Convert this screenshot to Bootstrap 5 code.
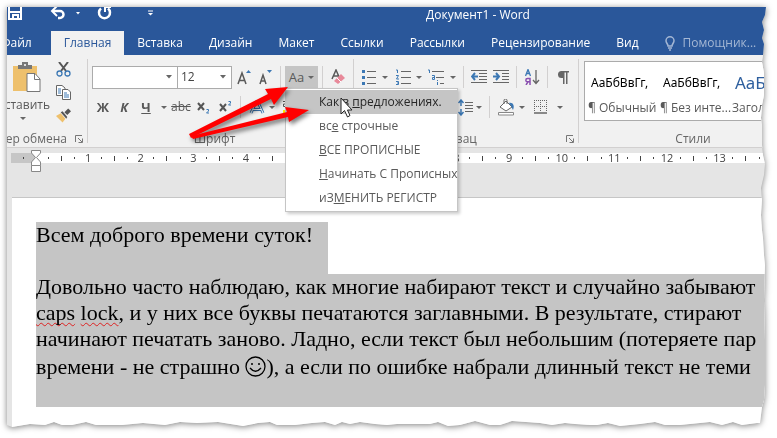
<!DOCTYPE html>
<html lang="ru">
<head>
<meta charset="utf-8">
<meta name="viewport" content="width=device-width, initial-scale=1">
<title>Документ1 - Word</title>
<link rel="stylesheet" href="https://cdn.jsdelivr.net/npm/bootstrap@5.3.0/dist/css/bootstrap.min.css">
<style>
  :root { --word-blue: #2a579a; --ink: #595959; --rule: #d2d0d0; }
  body { background: #fff; font: 12px/16px "Open Sans", "Noto Sans", sans-serif; color: var(--ink); overflow: hidden; }
  .sheet-shadow { padding: 7px 11px 8px 7px; filter: drop-shadow(0 1px 3px rgba(0,0,0,.5)); }
  .window { clip-path: url(#torn); background: #e5e5e5; }
  .window svg, .overlay svg { display: block; flex: none; }

  .titlebar { height: 24px; background: var(--word-blue); color: #fff; }
  .quick { width: 419px; height: 24px; }
  .tabs { height: 24px; background: var(--word-blue); flex-wrap: nowrap; --bs-nav-link-padding-x: 13px; --bs-nav-link-padding-y: 4px; }
  .tabs .nav-link { color: #fff; font-size: 12px; line-height: 16px; white-space: nowrap; border-radius: 0; }
  .tabs .nav-link.active { background: #f1f1f1; color: var(--word-blue); }
  .tabs .tab-file { margin-left: -19px; padding-right: 19px; }
  .tabs .tab-help { color: #a4b7d4; }

  .ribbon { background: #f1f1f1; border-bottom: 1px solid var(--rule); height: 93px; padding: 4px 0; }
  .group { border-right: 1px solid var(--rule); padding-top: 7px; flex: none; }
  .g-clip { width: 81px; padding-top: 3px; }
  .g-font { width: 266px; padding-left: 4px; }
  .g-para { width: 225px; padding-left: 7px; }
  .g-style { border: 0; padding: 2px 0 0 5px; min-width: 188px; }
  .line { height: 22px; }
  .line + .line { margin-top: 8px; }
  .clip-tools { height: 56px; }
  .cap { margin-top: 13px; height: 16px; color: #666; }
  .g-style .cap { margin-top: 10px; }
  .tool { border: 0; background: none; padding: 0; color: var(--ink); height: 22px; display: flex; align-items: center; justify-content: center; font-size: 13px; line-height: 16px; flex: none; }
  .w12 { width: 12px; } .w16 { width: 16px; } .w20 { width: 20px; } .w22 { width: 22px; } .w24 { width: 24px; }
  .caret { width: 0; height: 0; border: 3px solid transparent; border-top-color: #666; border-bottom: 0; flex: none; }
  .vr-line { width: 1px; height: 22px; background: var(--rule); flex: none; }
  .pick { height: 23px; border: 1px solid #ababab; border-radius: 0; padding: 0 16px 0 3px; font-size: 12px; line-height: 16px; color: #444; background-color: #fff; background-position: right 5px center; background-size: 6px 4px;
    background-image: url("data:image/svg+xml,%3Csvg xmlns='http://www.w3.org/2000/svg' viewBox='0 0 6 4'%3E%3Cpath d='M0 0h6L3 3.500z' fill='%23666'/%3E%3C/svg%3E"); }
  .pick-name { width: 86px; }
  .pick-size { width: 55px; margin-left: -1px; }
  .case-btn { width: 33px; background: #c5c5c5; gap: 4px; }
  .paste { font-size: 12px; margin-right: 6px; }
  .strike { font-size: 12px; }

  .gallery { border: 1px solid #ababab; background: #fff; height: 60px; overflow: hidden; }
  .style-item { width: 72px; flex: none; border: 0; background: none; padding: 0 0 0 3px; text-align: left; color: var(--ink); white-space: nowrap; font-size: 12px; }
  .sample { color: #000; padding: 6px 0 0 3px; font: 12px/30px "Noto Sans", sans-serif; }
  .sample-h { color: #2e5f9e; font-size: 17px; }
  .style-name { padding-top: 2px; }

  .case-menu { --bs-dropdown-min-width: 173px; --bs-dropdown-padding-y: 1px; --bs-dropdown-padding-x: 0; --bs-dropdown-border-radius: 0; --bs-dropdown-border-color: #c5c5c5; --bs-dropdown-link-color: #5a5a5a; --bs-dropdown-item-padding-y: 4px; --bs-dropdown-item-padding-x: 33px; --bs-dropdown-font-size: 12px; top: 100%; left: 0; box-shadow: 2px 2px 3px rgba(0,0,0,.2); }
  .case-menu .dropdown-item { padding-right: 0; line-height: 16px; }
  .case-menu .current { background: #c5c5c5; color: #262626; }

  .ruler-area { height: 49px; padding: 5px 0 0 4px; overflow: hidden; }
  .ruler { height: 10px; background: #fff; font: 11px/10px "Open Sans", sans-serif; color: #444; }
  .ruler-margin { width: 25px; height: 10px; background: #c6c6c6; flex: none; }
  .indent-mark { margin: -3px -5px 0 -5px; z-index: 1; position: relative; }
  .ticks { flex: 0 0 743px; padding-left: 6px; }
  .ticks > span { flex: 1 1 0; display: flex; align-items: center; justify-content: center; height: 10px; }
  .dot { width: 1px; height: 2px; background: #444; }
  .bar { width: 1px; height: 5px; background: #444; }

  .doc { margin-left: 5px; background: #fff; border-top: 1px solid #c6c6c6; padding: 24px 0 20px 24px; color: #000; font: 22px/26px "Liberation Serif", serif; overflow: hidden; }
  .doc p { margin: 0; white-space: nowrap; background: #c5c5c5; }
  .doc .greeting { width: 292px; height: 52px; }
  .doc .tall { line-height: 32px; height: 29px; display: flex; align-items: center; }
  .doc .rest { height: 26px; }
  .typo { text-decoration: underline wavy #d22 1px; text-underline-offset: 2px; text-decoration-skip-ink: none; }
  .overlay { position: absolute; left: 180px; top: 76px; z-index: 1100; pointer-events: none; }
  .arrows { filter: drop-shadow(2px 3px 2px rgba(0,0,0,.5)); }
</style>
<script src="https://cdn.jsdelivr.net/npm/bootstrap@5.3.0/dist/js/bootstrap.bundle.min.js"></script>
</head>
<body>
<svg width="0" height="0" class="position-absolute" aria-hidden="true">
  <clipPath id="torn" clipPathUnits="objectBoundingBox">
    <path transform="scale(.00131752 .00238095)" d="M0 0H759L758 8 755 15 757 23 755 31 757 37 756 48 755 55 757 66 757 88 755 98 754 111 755 118 755 138 756 148 758 157 757 168 754 181 755 193 754 208 755 223 756 231 757 248 758 258 757 293 758 333 758 378 757 393 755 400 753 416 750 416 735 418 726 415 715 418 703 415 673 418 658 418 648 415 633 417 613 419 601 416 590 418 583 418 568 417 558 416 545 418 533 416 505 414 493 418 483 418 468 414 453 418 441 419 431 415 423 417 390 417 380 418 368 417 353 415 343 417 335 415 328 418 318 415 305 416 288 418 270 418 263 415 251 416 236 419 211 415 190 416 173 415 158 418 136 416 115 418 89 418 79 415 65 418 55 418 47 415 38 418 23 417 5 420 0 418Z"/>
  </clipPath>
</svg>

<div class="sheet-shadow">
<div class="window">
  <header class="titlebar d-flex align-items-start">
    <div class="quick flex-shrink-0">
      <svg width="160" height="22" viewBox="0 0 160 22" fill="none" stroke="#fff" stroke-width="2">
        <path d="M2 0V12H14V0M2 5H14"/><path d="M6 12V8H11V12" stroke-width="2"/>
        <path d="M46 4H53A3.500 3.500 0 0 1 53 11H51" stroke-width="2.500"/><path d="M50-1L45 4L50 9"/>
        <path d="M69 5H73L71 7.500Z" fill="#fff" stroke="none"/>
        <path d="M94 1.500A5.500 5.500 0 1 0 101 1.500" stroke-width="2.500"/><path d="M98 5V0H104"/>
        <path d="M141 4H146" stroke-width="1"/><path d="M141 6H146L143.500 8.500Z" fill="#fff" stroke="none"/>
      </svg>
    </div>
    <div class="text-nowrap">Документ1 - Word</div>
  </header>

  <nav class="nav tabs" aria-label="Лента">
    <a class="nav-link tab-file" href="#">Файл</a>
    <a class="nav-link active" href="#" aria-current="page">Главная</a>
    <a class="nav-link" href="#">Вставка</a>
    <a class="nav-link" href="#">Дизайн</a>
    <a class="nav-link" href="#">Макет</a>
    <a class="nav-link" href="#">Ссылки</a>
    <a class="nav-link" href="#">Рассылки</a>
    <a class="nav-link" href="#">Рецензирование</a>
    <a class="nav-link" href="#">Вид</a>
    <a class="nav-link tab-help d-flex align-items-center gap-2" href="#">
      <svg width="10" height="15" viewBox="0 0 10 15" fill="none" stroke="#a4b7d4" stroke-width="1.500"><path d="M3 10C3 8 1 7 1 4.800A4 4 0 0 1 9 4.800C9 7 7 8 7 10ZM3 12H7M4 14H6"/></svg>
      Помощник...</a>
  </nav>

  <div class="ribbon d-flex align-items-stretch">
    <section class="group g-clip" aria-label="Буфер обмена">
      <div class="clip-tools d-flex justify-content-end">
        <button class="tool paste flex-column h-auto justify-content-start">
          <svg class="ms-2" width="28" height="31" viewBox="0 0 28 31"><path d="M0 4H24V29H0Z" fill="#eec06c"/><path d="M5 7V3H9V0H15V3H19V7Z" fill="#777"/><circle cx="12" cy="3" r="1" fill="#fff"/><path d="M14 11.500H22L27 17V29.500H14Z" fill="#fff" stroke="#777"/><path d="M21.500 12V17.500H27" fill="none" stroke="#777"/></svg>
          <span class="text-nowrap mt-1">Вставить</span>
          <span class="caret mt-1"></span>
        </button>
        <div class="d-flex flex-column gap-2 pe-3">
          <button class="tool h-auto" aria-label="Вырезать"><svg width="15" height="15" viewBox="0 0 15 15" fill="none"><path d="M3 0L10 9M12 0L5 9" stroke="#555" stroke-width="2"/><circle cx="3.500" cy="11.500" r="2.500" stroke="#3c78b4" stroke-width="1.300"/><circle cx="11.500" cy="11.500" r="2.500" stroke="#3c78b4" stroke-width="1.300"/></svg></button>
          <button class="tool h-auto" aria-label="Копировать"><svg width="15" height="15" viewBox="0 0 15 15" fill="#fff" stroke="#666"><path d="M.5.500H6L9 3V10.500H.5Z"/><path d="M6.500 4.500H12L14.500 7V14.500H6.500Z"/><path d="M2 4H5M2 6H5M2 8H5M8 8H11M8 10H13M8 12H13" stroke="#3c78b4"/></svg></button>
          <button class="tool h-auto" aria-label="Формат по образцу"><svg width="15" height="15" viewBox="0 0 16 15"><path d="M0 8L5 5L10 11L7 15Z" fill="#eec06c"/><path d="M5 4L7 3L12 9L11 11Z" fill="#555"/><path d="M9 4L13 0L16 3L12 7Z" fill="#555"/></svg></button>
        </div>
      </div>
      <div class="cap d-flex justify-content-end align-items-center text-nowrap pe-1"><span class="pe-2">Буфер обмена</span>
        <svg width="8" height="8" viewBox="0 0 8 8" fill="none" stroke="#777"><path d="M.5 7V.5H7M3 3L7 7M7.500 3.500V7.500H3.500"/></svg></div>
    </section>

    <section class="group g-font" aria-label="Шрифт">
      <div class="line d-flex align-items-center">
        <select class="form-select pick pick-name flex-shrink-0" aria-label="Имя шрифта"><option></option><option>Calibri</option></select>
        <select class="form-select pick pick-size flex-shrink-0" aria-label="Размер шрифта"><option>12</option><option>14</option></select>
        <button class="tool w24" aria-label="Увеличить размер"><svg width="16" height="16" viewBox="0 0 16 16"><path d="M2 15L6 4L10 15M3.500 11.500H9" fill="none" stroke="#595959" stroke-width="1.500"/><path d="M10 4L12.500 1L15 4Z" fill="#3c78b4"/></svg></button>
        <button class="tool w20" aria-label="Уменьшить размер"><svg width="16" height="16" viewBox="0 0 16 16"><path d="M2 15L5 6L8 15M3 12H7.500" fill="none" stroke="#595959" stroke-width="1.500"/><path d="M9 1H14L11.500 4Z" fill="#3c78b4"/></svg></button>
        <span class="vr-line ms-1"></span>
        <div class="dropdown ms-1">
          <button class="tool case-btn" aria-expanded="true" aria-haspopup="true">Aa<span class="caret"></span></button>
          <ul class="dropdown-menu case-menu show">
            <li><a class="dropdown-item current" href="#">Как в <u>п</u>редложениях.</a></li>
            <li><a class="dropdown-item" href="#">вс<u>е</u> строчные</a></li>
            <li><a class="dropdown-item" href="#"><u>В</u>СЕ ПРОПИСНЫЕ</a></li>
            <li><a class="dropdown-item" href="#"><u>Н</u>ачинать С Прописных</a></li>
            <li><a class="dropdown-item" href="#">иЗ<u>М</u>ЕНИТЬ РЕГИСТР</a></li>
          </ul>
        </div>
        <span class="vr-line ms-1"></span>
        <button class="tool w24 ms-1" aria-label="Очистить формат"><svg width="16" height="16" viewBox="0 0 16 16"><path d="M1 10L5 1L9 10M2.500 7H7" fill="none" stroke="#595959" stroke-width="1.500"/><path d="M3 12L10 5L14 9L7 15Z" fill="#e8899a"/><path d="M6 9L10 13" stroke="#fff"/></svg></button>
      </div>
      <div class="line d-flex align-items-center">
        <button class="tool w22 fw-bold">Ж</button>
        <button class="tool w20 fw-bold fst-italic">К</button>
        <button class="tool w24 fw-bold text-decoration-underline">Ч</button>
        <button class="tool w12" aria-label="Вид подчёркивания"><span class="caret"></span></button>
        <button class="tool w22 text-decoration-line-through strike">abc</button>
        <button class="tool w24" aria-label="Подстрочный"><svg width="14" height="14" viewBox="0 0 14 14" fill="none"><path d="M1 3L7 10M7 3L1 10" stroke="#555" stroke-width="2"/><path d="M9.500 9.500H11.500V11L9.500 13H12" stroke="#3c78b4"/></svg></button>
        <button class="tool w20" aria-label="Надстрочный"><svg width="14" height="14" viewBox="0 0 14 14" fill="none"><path d="M1 4L7 11M7 4L1 11" stroke="#555" stroke-width="2"/><path d="M9.500 1.500H11.500V3L9.500 5H12" stroke="#3c78b4"/></svg></button>
        <span class="vr-line ms-1"></span>
        <button class="tool w24 ms-1" aria-label="Эффекты"><svg width="16" height="16" viewBox="0 0 16 16" fill="none" stroke-linejoin="round"><path d="M2 14L7 3H9L14 14M4 10.500H12" stroke="#3c78b4" stroke-width="3"/><path d="M2 14L7 3H9L14 14M4 10.500H12" stroke="#fff" stroke-width="1"/></svg></button>
        <span class="caret"></span>
        <button class="tool w20 ms-1" aria-label="Цвет выделения"><svg width="20" height="16" viewBox="0 0 20 16"><path d="M4 2.500H7.500V7.500H4.500V5H7" fill="none" stroke="#555"/><path d="M4 11H18V15H4Z" fill="#ffef00"/></svg></button>
      </div>
      <div class="cap text-center pe-3">Шрифт</div>
    </section>

    <section class="group g-para" aria-label="Абзац">
      <div class="line d-flex align-items-center">
        <button class="tool w16" aria-label="Маркеры"><svg width="14" height="15" viewBox="0 0 14 15"><path d="M0 0H3V3H0ZM0 6H3V9H0ZM0 12H3V15H0Z" fill="#3c78b4"/><path d="M5 1.500H14M5 7.500H14M5 13.500H14" stroke="#666"/></svg></button>
        <button class="tool w16" aria-label="Вид маркеров"><span class="caret"></span></button>
        <button class="tool w20" aria-label="Нумерация"><svg width="15" height="16" viewBox="0 0 15 16" fill="none"><path d="M0 1H1.500V4M0 6.500H2.500L.5 10H3M0 12.500H2.500V15.500H0M1 14H2.500" stroke="#3c78b4"/><path d="M5 2.500H15M5 8.500H15M5 14.500H15" stroke="#666"/></svg></button>
        <button class="tool w12" aria-label="Вид нумерации"><span class="caret"></span></button>
        <button class="tool w22" aria-label="Многоуровневый список"><svg width="17" height="16" viewBox="0 0 17 16" fill="none"><path d="M0 1H1.500V4M4 6.500H6.500V10.500H4.500V8.500H6M9.500 11V12M9.500 13V16" stroke="#3c78b4"/><path d="M4 2.500H16M8 8.500H16M12 14.500H16" stroke="#666"/></svg></button>
        <button class="tool w12" aria-label="Вид списка"><span class="caret"></span></button>
        <span class="vr-line ms-1"></span>
        <button class="tool w22 ms-1" aria-label="Уменьшить отступ"><svg width="16" height="14" viewBox="0 0 16 14" fill="none"><path d="M0 .5H16M8 3.500H16M8 6.500H16M8 9.500H16M0 12.500H16" stroke="#666"/><path d="M7 6.500H1M4 3L1 6.500L4 10" stroke="#3c78b4" stroke-width="2"/></svg></button>
        <button class="tool w22" aria-label="Увеличить отступ"><svg width="16" height="14" viewBox="0 0 16 14" fill="none"><path d="M0 .5H16M9 3.500H16M9 6.500H16M9 9.500H16M0 12.500H16" stroke="#666"/><path d="M0 6.500H6M3 3L6 6.500L3 10" stroke="#3c78b4" stroke-width="2"/></svg></button>
        <span class="vr-line ms-1"></span>
        <button class="tool w22 ms-1" aria-label="Сортировка"><svg width="15" height="16" viewBox="0 0 15 16" fill="none"><path d="M.5 7L3 .5L5.500 7M1.500 4.500H4.500" stroke="#3c78b4" stroke-width="1.300"/><path d="M5 16V9.500H2.500A1.600 1.600 0 0 0 2.500 12.800H5M3 12.800L1 16" stroke="#8a4fb0" stroke-width="1.500"/><path d="M11 1V14M8 11L11 14.500L14 11" stroke="#666" stroke-width="1.300"/></svg></button>
        <span class="vr-line ms-1"></span>
        <button class="tool w22 ms-1" aria-label="Знаки абзаца"><svg width="12" height="13" viewBox="0 0 12 13"><path d="M5 0H12V1.500H10.500V13H9V1.500H7.500V13H6V7H4.500A3.500 3.500 0 0 1 4.500 0Z" fill="#666"/></svg></button>
      </div>
      <div class="line d-flex align-items-center justify-content-end pe-2">
        <button class="tool w16" aria-label="Интервал"><svg width="15" height="17" viewBox="0 0 15 17" fill="none"><path d="M3 1V7M.5 4L3 1L5.500 4M3 10V16M.5 13L3 16L5.500 13" stroke="#3c78b4" stroke-width="1.500"/><path d="M7 3.500H15M7 6.500H15M7 9.500H15M7 12.500H15" stroke="#666"/></svg></button>
        <button class="tool w12" aria-label="Вид интервала"><span class="caret"></span></button>
        <span class="vr-line ms-1 me-2"></span>
        <button class="tool w16" aria-label="Заливка"><svg width="17" height="17" viewBox="0 0 17 17"><path d="M2 8L8 2L14 8L8 12Z" fill="#fff" stroke="#666"/><path d="M6 5V1.500A1.500 1.500 0 0 1 9 1.500V5" fill="none" stroke="#666"/><path d="M11 4C15 3 17 7 15 11C14 10 14 8 13 7Z" fill="#3c78b4"/><path d="M.5 13.500H15.500V16H.5Z" fill="#fff" stroke="#888"/></svg></button>
        <button class="tool w16" aria-label="Цвет заливки"><span class="caret"></span></button>
        <button class="tool w20" aria-label="Границы"><svg width="13" height="14" viewBox="0 0 13 14" fill="none" stroke="#666"><path d="M0 .5H13M0 6.500H13M.5 0V12M6.500 0V12M12.500 0V12" stroke-dasharray="1 1"/><path d="M0 13H13" stroke-width="1.500"/></svg></button>
        <button class="tool w20" aria-label="Вид границ"><span class="caret"></span></button>
      </div>
      <div class="cap d-flex align-items-center pe-1"><span class="flex-grow-1 text-center pe-2">Абзац</span>
        <svg width="8" height="8" viewBox="0 0 8 8" fill="none" stroke="#777"><path d="M.5 7V.5H7M3 3L7 7M7.500 3.500V7.500H3.500"/></svg></div>
    </section>

    <section class="group g-style flex-grow-1" aria-label="Стили">
      <div class="gallery d-flex align-items-start">
        <button class="style-item"><span class="sample d-block">АаБбВвГг,</span><span class="style-name d-block">¶ Обычный</span></button>
        <button class="style-item"><span class="sample d-block">АаБбВвГг,</span><span class="style-name d-block">¶ Без инте...</span></button>
        <button class="style-item"><span class="sample sample-h d-block">АаБ</span><span class="style-name d-block">Заголо</span></button>
      </div>
      <div class="cap text-center">Стили</div>
    </section>
  </div>

  <div class="ruler-area">
    <div class="ruler d-flex align-items-start">
      <div class="ruler-margin d-flex align-items-center justify-content-center"><span class="dot"></span></div>
      <svg class="indent-mark" width="10" height="22" viewBox="0 0 10 22" fill="#fff" stroke="#888"><path d="M.5.500H9.500V3L5.500 7.500L9.500 12V15.500H.5V12L4.500 7.500L.5 3Z"/><path d="M.5 15.500H9.500V21.500H.5Z"/></svg>
      <div class="ticks d-flex" id="ticks"></div>
    </div>
  </div>

  <main class="doc">
    <p class="greeting">Всем доброго времени суток!</p>
    <p>Довольно часто наблюдаю, как многие набирают текст и случайно забывают</p>
    <p><span class="typo">caps</span> <span class="typo">lock</span>, и у них все буквы печатаются заглавными. В результате, стирают</p>
    <p>начинают печатать заново. Ладно, если текст был небольшим (потеряете пар</p>
    <p class="tall">времени - не страшно&nbsp;<svg width="21" height="21" viewBox="0 0 21 21" fill="none" stroke="#000" role="img" aria-label="улыбка"><circle cx="10.500" cy="10.500" r="9.500" stroke-width="1.300"/><circle cx="7" cy="8" r="1" fill="#000" stroke="none"/><circle cx="14" cy="8" r="1" fill="#000" stroke="none"/><path d="M5 12Q10.500 18.500 16 12" stroke-width="1.300"/></svg>), а если по ошибке набрали длинный текст не теми</p>
    <p class="rest"></p>
  </main>
</div>
</div>

<div class="overlay" aria-hidden="true">
  <svg width="180" height="72" viewBox="0 0 180 72">
    <g class="arrows" fill="#f00">
      <path d="M9 58L88 18L85 13L108 11L94 29L91 23L11 62Z"/>
      <path d="M11 60L107 36L105 31L129 34L109 46L108 41L13 63Z"/>
    </g>
    <path d="M161 22V38L164.500 34.500L167.500 41L170 39.500L167.500 34H172Z" fill="#fff" stroke="#222"/>
  </svg>
</div>

<script>
  // One ruler unit is four steps: dot, half tick, dot, number.
  document.getElementById('ticks').innerHTML = Array.from({ length: 14 }, (_, i) =>
    `<span><i class="dot"></i></span><span><i class="bar"></i></span><span><i class="dot"></i></span><span>${i + 1}</span>`).join('');
</script>
</body>
</html>
